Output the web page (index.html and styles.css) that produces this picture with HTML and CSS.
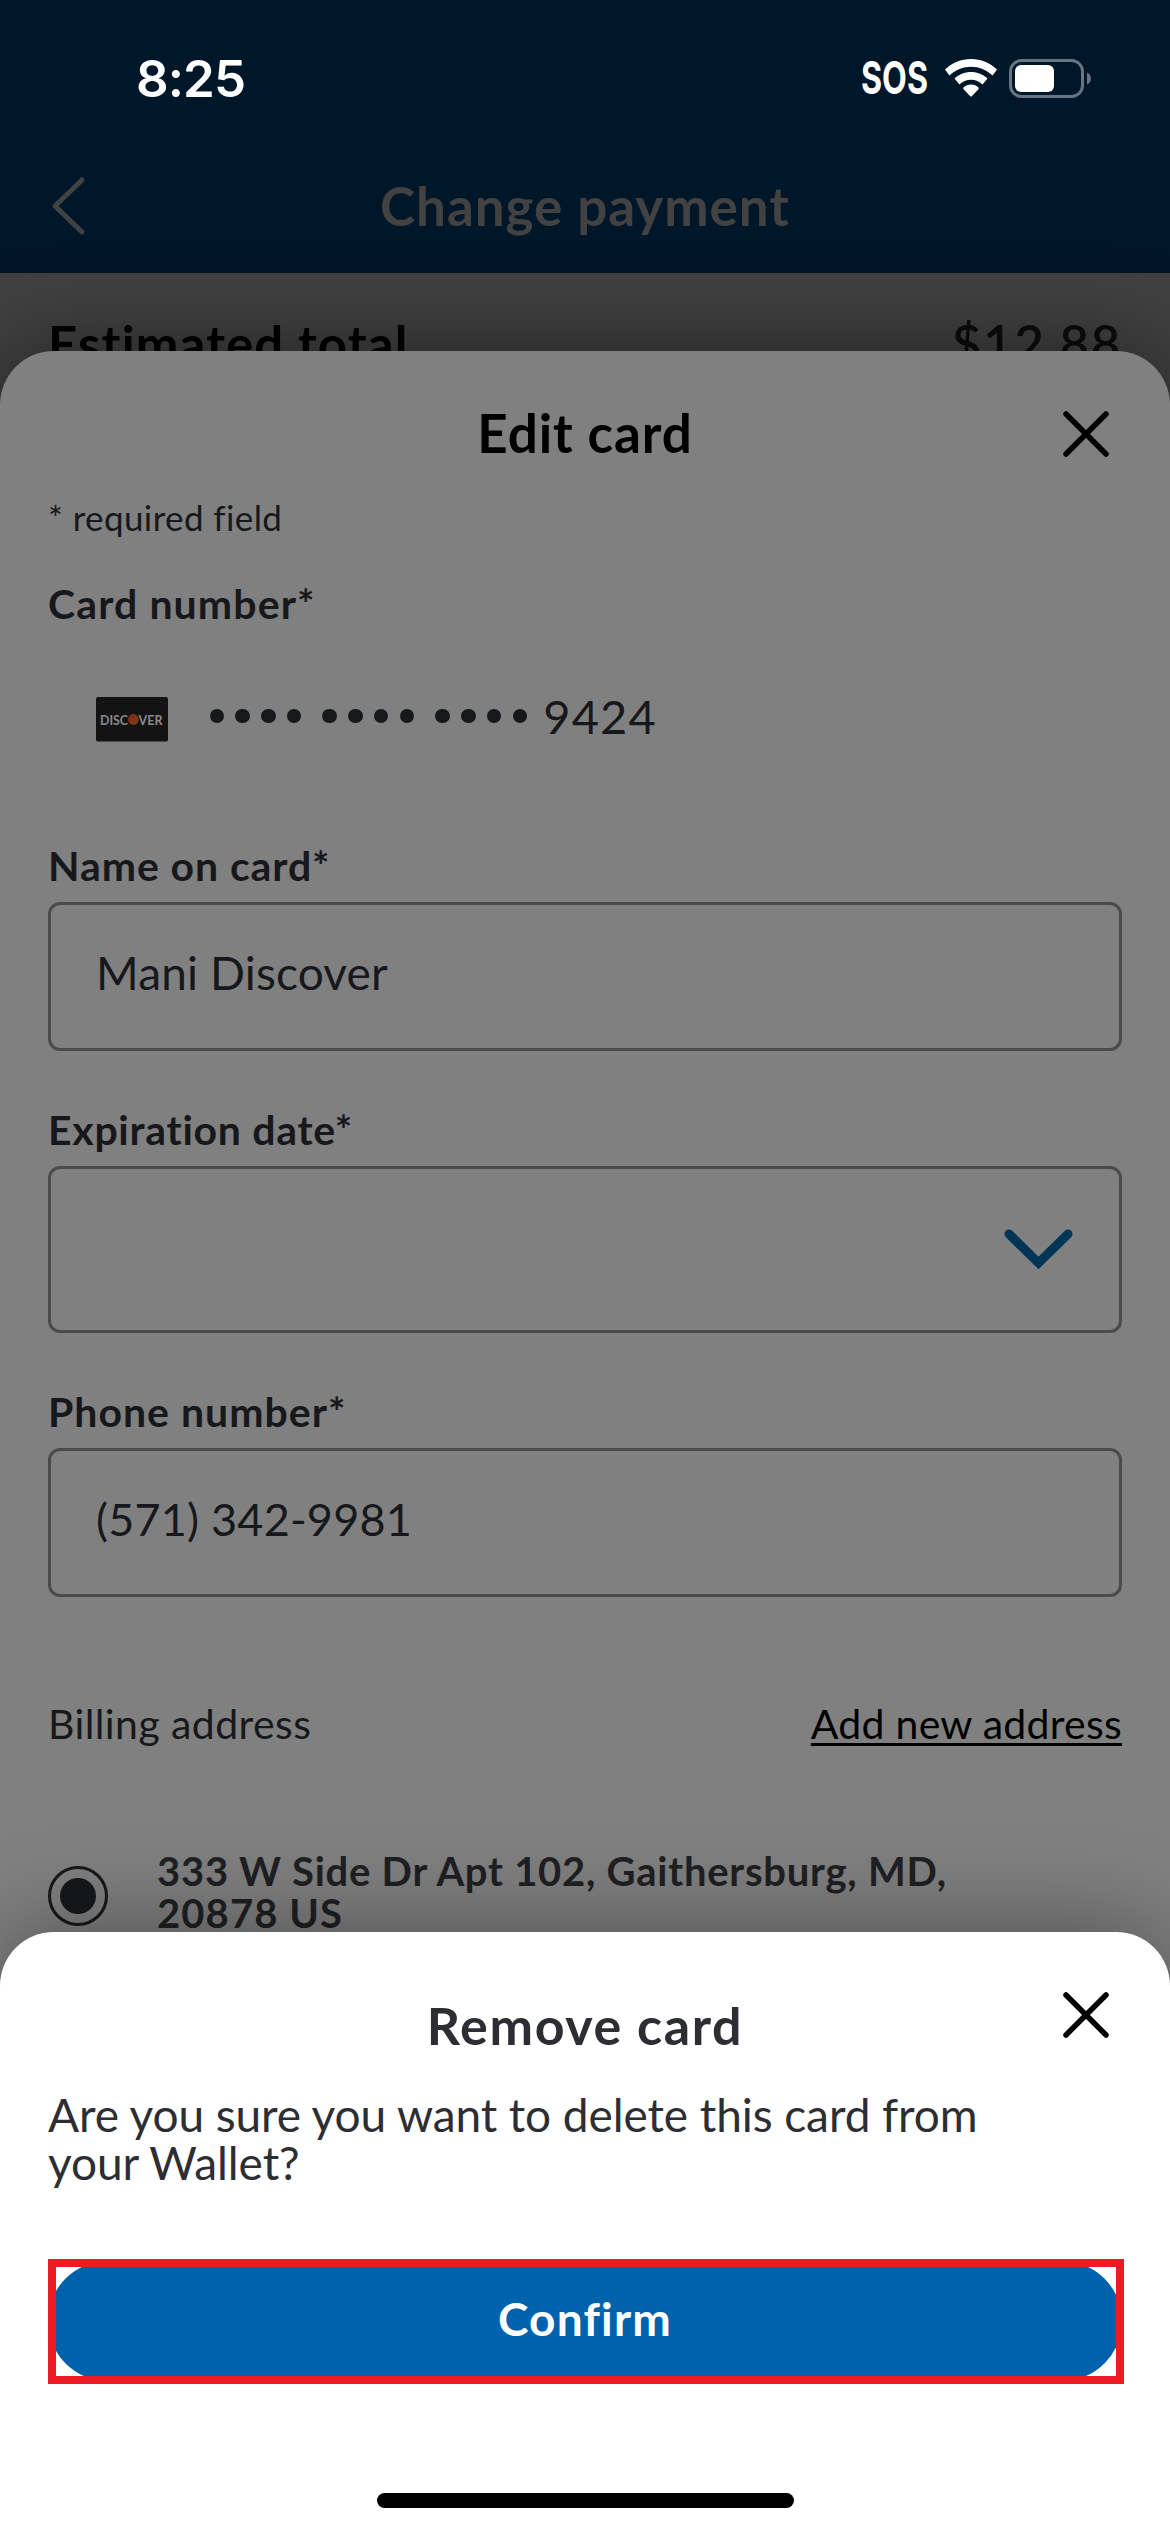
FILE: index.html
```html
<!DOCTYPE html>
<html lang="en">
<head>
<meta charset="utf-8">
<title>Change payment</title>
<link rel="stylesheet" href="styles.css">
</head>
<body>
<div class="screen">
  <header class="header">
    <div class="status">
      <span class="time">8:25</span>
      <div class="indicators">
        <svg class="sos" width="74" height="56" viewBox="0 0 74 56"><text class="sos-text" x="3" y="44" textLength="67" lengthAdjust="spacingAndGlyphs">SOS</text></svg>
        <svg class="wifi" width="52" height="38" viewBox="0 0 52 38"><path class="fill" d="M26 0C36 0 45 4 52 10.500L47.500 16.500C41.500 11 34 7.800 26 7.800S10.500 11 4.500 16.500L0 10.500C7 4 16 0 26 0Z"/><path class="fill" d="M26 13C32.500 13 38 15.500 42.500 19.500L37.500 25.500C34.500 22.500 30.500 20.700 26 20.700S17.500 22.500 14.500 25.500L9.500 19.500C14 15.500 19.500 13 26 13Z"/><path class="fill" d="M26 25.500C29 25.500 31.500 26.500 33.500 28.500Q34 29.500 33.200 30.500L27 37Q26 38 25 37L18.800 30.500Q18 29.500 18.500 28.500C20.500 26.500 23 25.500 26 25.500Z"/></svg>
        <svg class="battery" width="82" height="39" viewBox="0 0 82 39"><rect class="shell" x="1.500" y="1.500" width="72" height="36" rx="11"/><rect class="fill" x="6" y="6" width="39" height="27" rx="6"/><path class="nub" d="M78 13.500C80.500 14.500 82 17 82 19.500S80.500 24.500 78 25.500Z"/></svg>
      </div>
    </div>
    <div class="nav">
      <svg class="back" width="40" height="62" viewBox="0 0 40 62"><path d="M34 5L7 31L34 57"/></svg>
      <h1 class="nav-title">Change payment</h1>
    </div>
  </header>

  <main class="summary">
    <span class="total-label">Estimated total</span>
    <span class="total-value">$12.88</span>
  </main>

  <section class="sheet edit-sheet">
    <h2 class="edit-title">Edit card</h2>
    <svg class="close edit-close" width="50" height="50" viewBox="0 0 50 50"><path d="M5 5L45 45M45 5L5 45"/></svg>
    <p class="required">* required field</p>
    <div class="label card-label">Card number*</div>
    <div class="card-row">
      <svg class="discover" width="72" height="45" viewBox="0 0 72 45"><defs><linearGradient id="ball" x1="0" y1="0" x2="1" y2="1"><stop offset="0" stop-color="#7a2613"/><stop offset="1" stop-color="#863f14"/></linearGradient></defs><rect class="plate" width="72" height="44.500" rx="2"/><text class="brand" x="4" y="27.500" textLength="28" lengthAdjust="spacingAndGlyphs">DISC</text><circle cx="37.300" cy="22.500" r="5.400" fill="url(#ball)"/><text class="brand" x="42.500" y="27.500" textLength="24" lengthAdjust="spacingAndGlyphs">VER</text></svg>
      <div class="dots">
        <div class="dot-group"><i></i><i></i><i></i><i></i></div>
        <div class="dot-group"><i></i><i></i><i></i><i></i></div>
        <div class="dot-group"><i></i><i></i><i></i><i></i></div>
      </div>
      <span class="last4">9424</span>
    </div>
    <div class="label name-label">Name on card*</div>
    <div class="field"><span class="name-value">Mani Discover</span></div>
    <div class="label exp-label">Expiration date*</div>
    <div class="field select"><svg class="chevron" width="72" height="46" viewBox="0 0 72 46"><path d="M7 7L36.500 36L66 7"/></svg></div>
    <div class="label phone-label">Phone number*</div>
    <div class="field"><span class="phone-value">(571) 342-9981</span></div>
    <div class="billing">
      <span class="billing-label">Billing address</span>
      <a class="add-link">Add new address</a>
    </div>
    <div class="address">
      <span class="radio"></span>
      <div class="address-text">333 W Side Dr Apt 102, Gaithersburg, MD,<br><span class="zip">20878 US</span></div>
    </div>
  </section>

  <section class="sheet remove-sheet">
    <h2 class="remove-title">Remove card</h2>
    <svg class="close remove-close" width="50" height="50" viewBox="0 0 50 50"><path d="M5 5L45 45M45 5L5 45"/></svg>
    <p class="question">Are you sure you want to delete this card from<br>your Wallet?</p>
    <div class="highlight"><button class="confirm">Confirm</button></div>
    <div class="home-indicator"></div>
  </section>
</div>
</body>
</html>
```
FILE: styles.css
```css
* { box-sizing: border-box; }
body { margin: 0; font-family: Lato, "Open Sans", sans-serif; color: #17181b; }
h1, h2, p { margin: 0; }
.screen { position: relative; width: 1170px; height: 2532px; overflow: hidden; background: #414141; }

.header { position: relative; height: 273px; background: #001729; }
.status { height: 156px; display: flex; align-items: center; justify-content: space-between; padding: 0 79px 0 136px; }
.time { font: 600 51px/51px Inter, sans-serif; letter-spacing: -0.9px; color: #fff; }
.indicators { display: flex; align-items: center; }
.sos-text { font: 700 45px Inter, sans-serif; fill: #fff; }
.sos { margin-right: 13px; }
.wifi { margin-right: 12px; }
.fill { fill: #fff; }
.shell { fill: none; stroke: #657583; stroke-width: 3; }
.nub { fill: #657583; }
.nav { position: relative; height: 117px; padding-bottom: 18px; display: flex; align-items: center; justify-content: center; }
.nav-title { font-weight: 700; font-size: 53px; line-height: 60px; letter-spacing: .95px; color: #424243; }
.back { position: absolute; left: 48px; top: 19px; }
.back path { fill: none; stroke: #404244; stroke-width: 5; stroke-linecap: round; stroke-linejoin: round; }

.summary { display: flex; justify-content: space-between; padding: 41px 48px 0; font-size: 51px; line-height: 60px; color: #000; }
.total-label { font-weight: 700; letter-spacing: 1.1px; }
.total-value { font-weight: 600; letter-spacing: 1.7px; color: #0b0c0d; }

.sheet { position: absolute; left: 0; right: 0; bottom: 0; padding: 0 48px; border-radius: 54px 54px 0 0; }
.edit-sheet { top: 351px; padding-top: 52px; background: #808080; box-shadow: 0 0 90px rgba(0, 0, 0, .5); }
.edit-title { font-weight: 700; font-size: 53px; line-height: 60px; letter-spacing: .9px; text-align: center; color: #000; }
.close { position: absolute; right: 59px; }
.close path { fill: none; stroke: #000; stroke-width: 5.500; stroke-linecap: round; }
.edit-close { top: 58px; }
.required { margin-top: 34px; font-size: 35px; line-height: 40px; letter-spacing: .4px; }
.label { font-weight: 700; font-size: 41px; line-height: 48px; white-space: nowrap; }
.card-label { margin-top: 43px; letter-spacing: 1.1px; }
.card-row { margin-top: 58px; height: 60px; padding-left: 48px; display: flex; align-items: center; }
.discover { margin-top: 6px; }
.plate { fill: #131313; }
.brand { font: 700 14px Lato, sans-serif; fill: #8a8a8a; }
.dots { display: flex; gap: 21px; margin-left: 41.500px; }
.dot-group { display: flex; gap: 11.300px; }
.dot-group i { width: 14.500px; height: 14.500px; border-radius: 50%; background: #17181b; }
.last4 { margin-left: 16px; font-size: 47px; line-height: 60px; letter-spacing: 1.2px; }
.name-label { margin-top: 96px; letter-spacing: .9px; }
.exp-label { margin-top: 55px; letter-spacing: .7px; }
.phone-label { margin-top: 55px; letter-spacing: 1px; }
.field { margin-top: 12px; height: 149px; border: 3px solid #4a4b4c; border-radius: 12px; padding: 0 45px 8px; display: flex; align-items: center; }
.select { height: 167px; justify-content: flex-end; padding-bottom: 0; }
.chevron path { fill: none; stroke: #003556; stroke-width: 9; stroke-linecap: round; }
.name-value { font-size: 46px; letter-spacing: .15px; }
.phone-value { font-size: 45px; letter-spacing: .2px; }
.billing { margin-top: 103px; display: flex; justify-content: space-between; font-size: 41px; line-height: 48px; }
.billing-label { letter-spacing: .4px; }
.add-link { color: #000; letter-spacing: .25px; text-decoration: underline; text-decoration-thickness: 3px; text-underline-offset: 4px; text-decoration-skip-ink: none; }
.address { margin-top: 103px; display: flex; }
.radio { width: 60px; height: 60px; margin-top: 15px; margin-right: 49px; border: 3px solid #17181b; border-radius: 50%; padding: 9px; background: #17181b content-box; }
.address-text { font-weight: 700; font-size: 40px; line-height: 41.700px; letter-spacing: .75px; white-space: nowrap; color: #1f2023; }
.zip { letter-spacing: 1.1px; }

.remove-sheet { top: 1932px; padding-top: 63px; background: #fff; color: #2d2e33; box-shadow: 0 0 100px rgba(0, 0, 0, .4); }
.remove-title { font-weight: 700; font-size: 52px; line-height: 60px; letter-spacing: 1.6px; text-align: center; }
.remove-close { top: 58px; }
.question { margin-top: 36px; font-size: 46px; line-height: 48px; letter-spacing: -.08px; white-space: nowrap; }
.highlight { margin: 72px -2px 0 0; height: 125px; border: 8px solid #ed1c24; overflow: hidden; }
.confirm { display: block; width: 1074px; height: 120px; margin: -6px -8px; padding: 0 0 4px; border: 0; border-radius: 60px; background: #0062ad; color: #fff; font: 700 46px/54px Lato, sans-serif; letter-spacing: 1.2px; }
.home-indicator { width: 417px; height: 15px; margin: 109px auto 0; border-radius: 8px; background: #000; }
```
